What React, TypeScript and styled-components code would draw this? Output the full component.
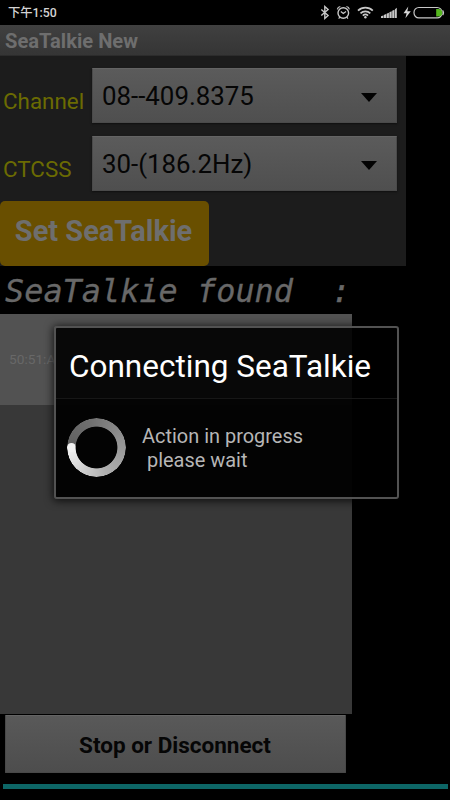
import React from 'react';
import styled, {createGlobalStyle} from 'styled-components';

const GlobalStyle = createGlobalStyle`
  * {
    box-sizing: border-box;
    margin: 0;
    padding: 0;
  }
  body {
    background: #000;
    font-family: Roboto, "Noto Sans CJK SC", sans-serif;
    overflow: hidden;
  }
`;

const Screen = styled.div`
  position: relative;
  width: 450px;
  height: 800px;
  background: #000;
  overflow: hidden;
`;

const StatusBar = styled.header`
  display: flex;
  align-items: center;
  justify-content: space-between;
  height: 25px;
  padding: 0 5px 0 8px;
  color: #d4d4d4;
  font-size: 12.3px;
  line-height: 24px;
  font-weight: 500;
`;

const StatusIcons = styled.svg`
  display: block;
  width: 130px;
  height: 25px;
`;

const TitleBar = styled.h1`
  height: 31px;
  padding-left: 5px;
  border-bottom: 1px solid #2c2c2c;
  background: linear-gradient(#404040, #353535);
  color: #6e6e6e;
  font-size: 20.15px;
  line-height: 32px;
  font-weight: 700;
  white-space: nowrap;
`;

const Settings = styled.section`
  width: 406px;
  height: 210px;
  padding-top: 12px;
  background: #1c1c1c;
`;

const Field = styled.div`
  display: flex;
  height: 55px;
  margin-bottom: 13px;
`;

const Label = styled.span`
  width: 92px;
  padding: 10px 0 0 3px;
  color: #6b6b02;
  font-size: 22.4px;
  line-height: 46px;
`;

const Select = styled.div`
  display: flex;
  justify-content: space-between;
  align-items: center;
  width: 305px;
  padding: 1px 19.5px 0 9px;
  border: 1px solid #4a4a4a;
  border-top-color: #646464;
  box-shadow: 0 1px 2px #101010;
  background: linear-gradient(#5b5b5b, #4f4f4f);
  color: #060606;
  font-size: 25.85px;
`;

const Arrow = styled.span`
  margin-top: 2px;
  border: 8.5px solid transparent;
  border-top: 9px solid #020202;
  border-bottom: 0;
`;

const SetButton = styled.button`
  display: block;
  width: 209px;
  height: 65px;
  margin-top: -3px;
  padding: 0 2px 5px 0;
  border: none;
  border-radius: 5px;
  background: #694f00;
  color: #6e6e6e;
  font-family: inherit;
  font-size: 29px;
  font-weight: 700;
`;

const Found = styled.h2`
  height: 48px;
  padding-left: 5px;
  color: #686868;
  font: italic 400 31.9px/50px "DejaVu Sans Mono", monospace;
  -webkit-text-stroke: .3px #686868;
  white-space: pre;
`;

const DeviceList = styled.ul`
  width: 352px;
  height: 400px;
  background: #383838;
  list-style: none;
`;

const Device = styled.li`
  height: 91px;
  padding-left: 9px;
  background: #525252;
  color: #686868;
  font-size: 13.7px;
  line-height: 91px;
`;

const StopButton = styled.button`
  display: block;
  width: 341px;
  height: 58px;
  margin: 1px 0 11px 5px;
  padding: 2px 1px 0 0;
  border: 1px solid #484848;
  border-top-color: #646464;
  border-radius: 1px;
  background: linear-gradient(#595959, #4d4d4d);
  color: #060606;
  font-family: inherit;
  font-size: 22.5px;
  font-weight: 700;
`;

const Line = styled.div`
  width: 445px;
  height: 5px;
  margin-left: 3px;
  background: #0d6666;
`;

const Dialog = styled.div`
  position: absolute;
  left: 54px;
  top: 326px;
  width: 345px;
  height: 173px;
  border: 2px solid #525252;
  border-radius: 3px;
  background: rgba(0, 0, 0, .9);
  box-shadow: 0 1px 9px 1px rgba(0, 0, 0, .75);
`;

const DialogTitle = styled.h3`
  height: 71px;
  padding-left: 13px;
  border-bottom: 1px solid #171717;
  color: #fff;
  font-size: 31.5px;
  font-weight: 400;
  line-height: 77px;
  white-space: nowrap;
`;

const DialogBody = styled.div`
  display: flex;
  align-items: center;
  height: 98px;
  padding-left: 11px;
  background: rgba(0, 0, 0, .4);
`;

const Ring = styled.div`
  position: relative;
  width: 59px;
  height: 59px;
  margin: -1px 16px 0 0;
  border-radius: 50%;
  background: conic-gradient(from 275deg, #606060, #707070 20%, #949494 45%, #b0b0b0 68%, #f5f5f5 99%, #606060);
  mask: radial-gradient(circle, transparent 20.5px, #000 21.3px, #000 29px, transparent 29.7px);
`;

const RingCap = styled.span`
  position: absolute;
  left: 0;
  top: 25px;
  width: 9px;
  height: 9px;
  border-radius: 50%;
  background: #f2f2f2;
`;

const Message = styled.p`
  color: #b6b6b6;
  font-size: 19.95px;
  line-height: 24px;
  white-space: pre;
`;

const fields = [
  {label: 'Channel', value: '08--409.8375'},
  {label: 'CTCSS', value: '30-(186.2Hz)'},
];

const Indicators: React.FC = () => (
  <StatusIcons viewBox="315 0 130 25" fill="none" stroke="#c8c8c8" strokeWidth="1.2">
    <path strokeWidth="1.4" d="M321.3 9.5l6.8 6-3.3 3V6.5l3.3 3-6.8 6"/>
    <circle cx="343.3" cy="13" r="5.3" strokeWidth="1.4"/>
    <path d="M340.8 11.5l2.5 2 2.7-2M337.3 9.3a3.8 3.8 0 0 1 3-2.8M346.4 6.5a3.8 3.8 0 0 1 3 2.8M339.8 17l-1.1 1.6M346.8 17l1.1 1.6"/>
    <path strokeWidth="1.7" d="M358 10.7a10.5 10.5 0 0 1 14.8 0M360.5 13.3a7 7 0 0 1 9.8 0M362.8 15.6a3.8 3.8 0 0 1 5.2 0"/>
    <circle cx="365.4" cy="17.2" r="1.2" fill="#c8c8c8" stroke="none"/>
    <path stroke="none" fill="#c8c8c8" d="M381 18v-1.7l2.3-.8V18zM383.8 18v-3l2.3-1V18zM386.6 18v-4.3l2.3-1V18zM389.4 18v-5.8l2.3-1V18zM392.2 18v-7.3l2.3-1V18zM395 18V9.2l1.8-1.5V18z"/>
    <path stroke="none" fill="#d5d5d5" d="M408.3 6.5l-4.8 6.8h3.1l-1.2 5 5.4-7h-3.5z"/>
    <rect x="414" y="7.5" width="28" height="10.4" rx="4.8"/>
    <path d="M442.6 10.3q1.8 2.4 0 4.8"/>
    <path stroke="none" fill="#55b81e" d="M436.2 8.9h2.2a3.8 3.8 0 0 1 0 7.6h-2.2z"/>
  </StatusIcons>
);

const App: React.FC = () => {
  return (
    <Screen>
      <GlobalStyle/>
      <StatusBar>
        <span>下午1:50</span>
        <Indicators/>
      </StatusBar>
      <TitleBar>SeaTalkie New</TitleBar>
      <Settings>
        {fields.map(field =>
          <Field key={field.label}>
            <Label>{field.label}</Label>
            <Select>
              <span>{field.value}</span>
              <Arrow/>
            </Select>
          </Field>
        )}
        <SetButton>Set SeaTalkie</SetButton>
      </Settings>
      <Found>{'SeaTalkie found  :'}</Found>
      <DeviceList>
        <Device>50:51:A</Device>
      </DeviceList>
      <StopButton>Stop or Disconnect</StopButton>
      <Line/>
      <Dialog>
        <DialogTitle>Connecting SeaTalkie</DialogTitle>
        <DialogBody>
          <Ring><RingCap/></Ring>
          <Message>{'Action in progress\n please wait'}</Message>
        </DialogBody>
      </Dialog>
    </Screen>
  );
};

export default App;
